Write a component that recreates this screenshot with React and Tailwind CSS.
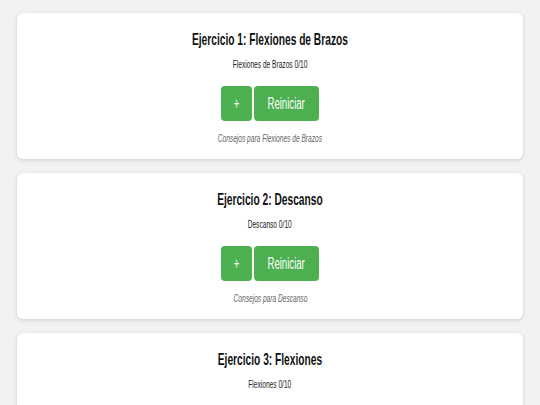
const exercises = [
  { id: 1, name: 'Flexiones de Brazos' },
  { id: 2, name: 'Descanso' },
  { id: 3, name: 'Flexiones' },
];

// squeezed text, the reference glyphs are narrow
const Narrow = ({ children, className = '' }) => (
  <span className={`inline-block scale-x-[0.6] whitespace-nowrap ${className}`}>{children}</span>
);

const ExerciseCard = ({ index, name, count = 0, goal = 10 }) => (
  <div className="bg-white rounded-md shadow-[0_1px_4px_rgba(0,0,0,0.15)] pt-[17px] pb-[14px] flex flex-col items-center">
    <h2 className="h-[20px] leading-[20px] text-[17px] font-bold text-[#111]">
      <Narrow>Ejercicio {index}: {name}</Narrow>
    </h2>
    <p className="mt-[7px] h-[14px] leading-[14px] text-[11px] text-[#222]">
      <Narrow>{name} {count}/{goal}</Narrow>
    </p>
    <div className="mt-[15px] flex gap-[2px]">
      <button className="w-[31px] h-[35px] rounded bg-[#4caf50] text-white text-[16px] flex items-center justify-center">
        <Narrow>+</Narrow>
      </button>
      <button className="w-[65px] h-[35px] rounded bg-[#4caf50] text-white text-[16px] flex items-center justify-center">
        <Narrow>Reiniciar</Narrow>
      </button>
    </div>
    <p className="mt-[10px] h-[14px] leading-[14px] text-[11px] italic text-[#666]">
      <Narrow>Consejos para {name}</Narrow>
    </p>
  </div>
);

export default function App() {
  return (
    <div className="min-h-screen bg-[#f2f2f2] px-[17px] pt-[13px] pb-6 flex flex-col gap-[14px] font-['Liberation_Sans',Arial,sans-serif]">
      {exercises.map((ex) => (
        <ExerciseCard key={ex.id} index={ex.id} name={ex.name} />
      ))}
    </div>
  );
}
